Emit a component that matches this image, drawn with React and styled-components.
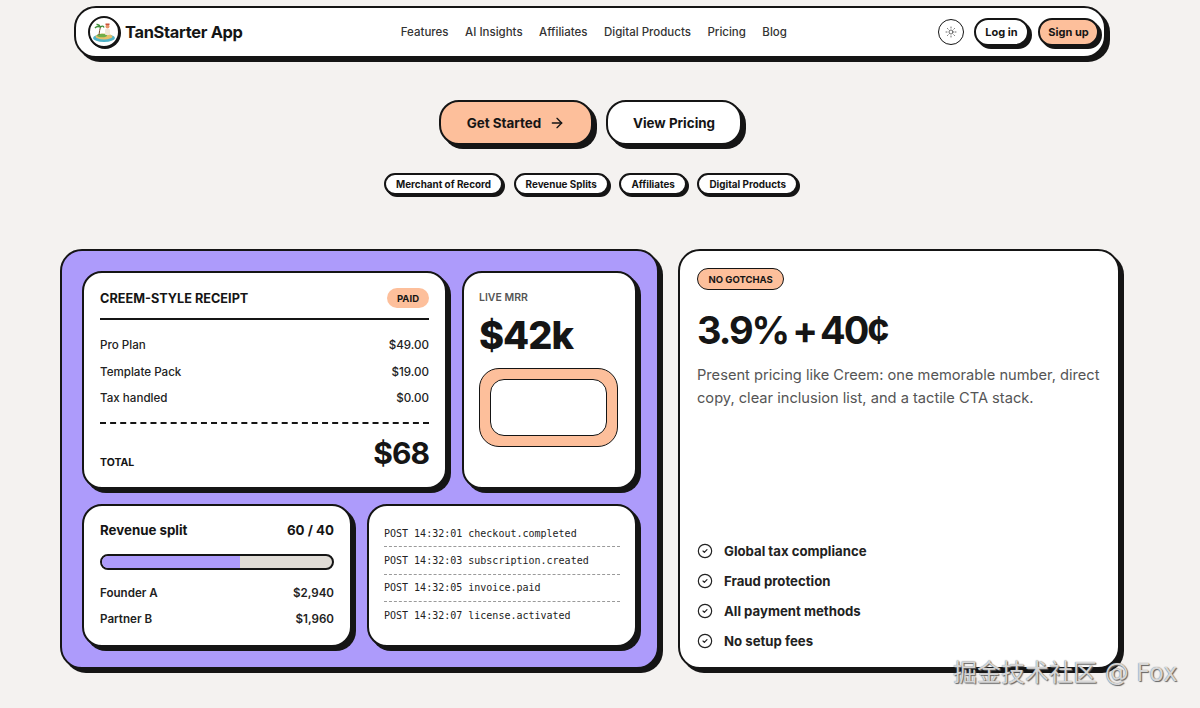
import React from 'react';
import styled, { createGlobalStyle } from 'styled-components';
import { ArrowRight, CircleCheck, Sun } from 'lucide-react';

const ink = '#151515';
const peach = '#fdbf9b';
const violet = '#ad9bfb';

const GlobalStyle = createGlobalStyle`
  html, body {
    margin: 0;
    padding: 0;
    background: #f4f2f0;
    color: ${ink};
    font-family: Inter, "Liberation Sans", sans-serif;
    overflow: hidden;
  }
  * { box-sizing: border-box; }
`;

const Page = styled.div`
  position: relative;
  height: 708px;
  padding-top: 6px;
`;

const Header = styled.header`
  width: 1032px;
  height: 52px;
  margin-left: 74px;
  padding: 0 5px 0 12px;
  display: flex;
  align-items: center;
  justify-content: space-between;
  background: #fff;
  border: 2px solid ${ink};
  border-radius: 22px;
  box-shadow: 4px 4px 0 ${ink};
`;

const Brand = styled.div`
  display: flex;
  align-items: center;
  gap: 5px;
  font-size: 16.4px;
  font-weight: 700;
  letter-spacing: -0.3px;
`;

const LogoMark = styled.div`
  width: 32px;
  height: 32px;
  border: 2px solid ${ink};
  border-radius: 50%;
  background: #fff;
  box-shadow: 1px 1px 0 ${ink};
  overflow: hidden;
`;

const Nav = styled.nav`
  display: flex;
  gap: 16.5px;
  margin-left: 7px;
  font-size: 11.5px;
  font-weight: 500;
  color: #333;
`;

const Actions = styled.div`
  display: flex;
  align-items: center;
  gap: 9px;
`;

const ThemeButton = styled.div`
  width: 26px;
  height: 26px;
  margin-right: 1px;
  display: flex;
  align-items: center;
  justify-content: center;
  border: 1px solid ${ink};
  border-radius: 50%;
`;

const SmallButton = styled.div`
  height: 28px;
  width: ${(p) => p.$w}px;
  display: flex;
  align-items: center;
  justify-content: center;
  font-size: 11px;
  font-weight: 700;
  background: ${(p) => (p.$primary ? peach : '#fff')};
  border: 2px solid ${ink};
  border-radius: 14px;
  box-shadow: 3px 3px 0 ${ink};
`;

const Hero = styled.div`
  margin-top: 42px;
  display: flex;
  justify-content: center;
  gap: 13px;
  padding-right: 19px;
`;

const HeroButton = styled.div`
  width: ${(p) => p.$w}px;
  height: 45px;
  display: flex;
  align-items: center;
  justify-content: center;
  gap: 8px;
  font-size: 13.4px;
  font-weight: 700;
  background: ${(p) => (p.$primary ? peach : '#fff')};
  border: 2px solid ${ink};
  border-radius: 20px;
  box-shadow: 4px 4px 0 ${ink};
`;

const Chips = styled.div`
  margin-top: 28px;
  display: flex;
  justify-content: center;
  gap: 10.5px;
  padding-right: 18px;
`;

const Chip = styled.div`
  height: 22px;
  padding: 0 10px;
  display: flex;
  align-items: center;
  font-size: 9.9px;
  font-weight: 700;
  background: #fff;
  border: 2px solid ${ink};
  border-radius: 11px;
  box-shadow: 2px 2px 0 ${ink};
`;

const Main = styled.main`
  margin: 54px 0 0 60px;
  display: grid;
  grid-template-columns: 599px 442px;
  gap: 19px;
  height: 420px;
`;

const VioletPanel = styled.section`
  padding: 20px;
  display: grid;
  grid-template-columns: 270px 80px 175px;
  grid-template-rows: 218px 143px;
  gap: 15px;
  background: ${violet};
  border: 2px solid ${ink};
  border-radius: 22px;
  box-shadow: 4px 4px 0 ${ink};
`;

const Card = styled.div`
  grid-column: ${(p) => p.$col};
  padding: ${(p) => p.$pad};
  display: flex;
  flex-direction: column;
  background: #fff;
  border: 2px solid ${ink};
  border-radius: 20px;
  box-shadow: 4px 4px 0 ${ink};
  min-width: 0;
`;

const ReceiptHead = styled.div`
  height: 32px;
  padding-bottom: 10px;
  display: flex;
  align-items: center;
  justify-content: space-between;
  font-size: 12.7px;
  font-weight: 700;
  border-bottom: 2px solid ${ink};
`;

const PaidPill = styled.span`
  width: 42px;
  height: 20px;
  display: flex;
  align-items: center;
  justify-content: center;
  font-size: 9.5px;
  font-weight: 700;
  background: ${peach};
  border-radius: 10px;
`;

const Rows = styled.div`
  margin-top: ${(p) => p.$top}px;
  display: flex;
  flex-direction: column;
  gap: ${(p) => p.$gap}px;
`;

const Row = styled.div`
  height: 14px;
  display: flex;
  align-items: center;
  justify-content: space-between;
  font-size: 11.6px;
  font-weight: ${(p) => p.$weight || 500};
  color: #222;
`;

const DashedLine = styled.div`
  margin-top: 17px;
  border-top: 2px dashed ${ink};
`;

const TotalRow = styled.div`
  margin-top: 11px;
  display: flex;
  align-items: flex-end;
  justify-content: space-between;
`;

const TotalLabel = styled.span`
  font-size: 10.5px;
  line-height: 13px;
  font-weight: 700;
  padding-bottom: 2.5px;
`;

const TotalValue = styled.span`
  font-size: 30px;
  line-height: 36px;
  font-weight: 700;
  letter-spacing: -1px;
`;

const Eyebrow = styled.div`
  margin-top: 3px;
  font-size: 10.5px;
  line-height: 14px;
  font-weight: 600;
  color: #555;
`;

const BigValue = styled.div`
  margin-top: 7px;
  font-size: 38px;
  line-height: 46px;
  font-weight: 800;
  letter-spacing: -1px;
`;

const PeachFrame = styled.div`
  width: 139px;
  height: 79px;
  margin-top: 10px;
  padding: 10px;
  background: ${peach};
  border: 1.5px solid ${ink};
  border-radius: 20px;
`;

const PeachInner = styled.div`
  height: 100%;
  background: #fff;
  border: 1.5px solid ${ink};
  border-radius: 14px;
`;

const SplitHead = styled.div`
  display: flex;
  justify-content: space-between;
  font-size: 13.3px;
  line-height: 18px;
  font-weight: 700;
`;

const Bar = styled.div`
  height: 16px;
  margin-top: 15px;
  background: #e0dcd6;
  border: 2px solid ${ink};
  border-radius: 8px;
  overflow: hidden;
`;

const BarFill = styled.div`
  height: 100%;
  background: ${violet};
`;

const LogLine = styled.div`
  height: 27.4px;
  flex: none;
  display: flex;
  align-items: center;
  font-family: "DejaVu Sans Mono", "Liberation Mono", monospace;
  font-size: 10px;
  color: #222;
  white-space: pre;
  border-bottom: ${(p) => (p.$last ? 'none' : '1px dashed #9a9a9a')};
`;

const PriceCard = styled.section`
  padding: 17px;
  display: flex;
  flex-direction: column;
  background: #fff;
  border: 2px solid ${ink};
  border-radius: 22px;
  box-shadow: 4px 4px 0 ${ink};
`;

const Badge = styled.div`
  align-self: flex-start;
  height: 22px;
  padding: 0 10.5px;
  display: flex;
  align-items: center;
  font-size: 9.5px;
  font-weight: 700;
  background: ${peach};
  border: 1.5px solid ${ink};
  border-radius: 11px;
`;

const PriceTitle = styled.h2`
  margin: 16px 0 0;
  font-size: 38px;
  line-height: 48px;
  font-weight: 700;
  letter-spacing: -2px;
  word-spacing: -3px;
`;

const PriceText = styled.p`
  margin: 9.5px 0 0;
  font-size: 14.65px;
  line-height: 23px;
  color: #555;
`;

const Inclusions = styled.ul`
  margin: auto 0 0;
  padding: 0;
  list-style: none;
  display: flex;
  flex-direction: column;
  gap: 12px;
`;

const Inclusion = styled.li`
  height: 18px;
  display: flex;
  align-items: center;
  gap: 11px;
  font-size: 13.2px;
  font-weight: 700;
  color: #222;
`;

const Watermark = styled.div`
  position: absolute;
  left: 953px;
  top: 658px;
  font-family: "DejaVu Sans", "Noto Sans CJK SC", sans-serif;
  font-size: 24px;
  line-height: 30px;
  color: rgba(255, 255, 255, 0.75);
  text-shadow: 0 0 1px #555, 1px 1px 1px #666;
  white-space: nowrap;
`;

const navItems = ['Features', 'AI Insights', 'Affiliates', 'Digital Products', 'Pricing', 'Blog'];
const chips = ['Merchant of Record', 'Revenue Splits', 'Affiliates', 'Digital Products'];
const receipt = [
  ['Pro Plan', '$49.00'],
  ['Template Pack', '$19.00'],
  ['Tax handled', '$0.00'],
];
const splits = [
  ['Founder A', '$2,940'],
  ['Partner B', '$1,960'],
];
const logs = [
  'POST 14:32:01 checkout.completed',
  'POST 14:32:03 subscription.created',
  'POST 14:32:05 invoice.paid',
  'POST 14:32:07 license.activated',
];
const inclusions = ['Global tax compliance', 'Fraud protection', 'All payment methods', 'No setup fees'];

const IslandLogo = () => (
  <svg width="28" height="28" viewBox="0 0 28 28">
    <ellipse cx="14" cy="20" rx="11" ry="4" fill="#4fb3c8" />
    <ellipse cx="14" cy="18.5" rx="8.5" ry="3" fill="#e6c06a" />
    <ellipse cx="12" cy="17.5" rx="5" ry="1.8" fill="#6fae4a" />
    <path d="M9 17 Q9.5 12 10.5 9" stroke="#7a5230" strokeWidth="1" fill="none" />
    <path d="M10.5 9 Q7 7.5 5 10 M10.5 9 Q9 6 6.5 6.5 M10.5 9 Q13 7 14 9.5" stroke="#3f8f3a" strokeWidth="1.4" fill="none" />
    <rect x="15" y="11" width="5" height="6" rx="1" fill="#f0e6d8" />
    <circle cx="17.5" cy="8.5" r="2" fill="#e8956a" />
    <rect x="15.5" y="5.5" width="4" height="1.6" fill="#c9503a" />
  </svg>
);

export default function App() {
  return (
    <Page>
      <GlobalStyle />
      <Header>
        <Brand>
          <LogoMark><IslandLogo /></LogoMark>
          TanStarter App
        </Brand>
        <Nav>
          {navItems.map((item) => <span key={item}>{item}</span>)}
        </Nav>
        <Actions>
          <ThemeButton><Sun size={12} strokeWidth={1.25} /></ThemeButton>
          <SmallButton $w={55}>Log in</SmallButton>
          <SmallButton $w={61} $primary>Sign up</SmallButton>
        </Actions>
      </Header>

      <Hero>
        <HeroButton $w={154} $primary>
          Get Started <ArrowRight size={16} strokeWidth={2} />
        </HeroButton>
        <HeroButton $w={136}>View Pricing</HeroButton>
      </Hero>

      <Chips>
        {chips.map((chip) => <Chip key={chip}>{chip}</Chip>)}
      </Chips>

      <Main>
        <VioletPanel>
          <Card $col="1 / span 2" $pad="15px 16px">
            <ReceiptHead>
              CREEM-STYLE RECEIPT
              <PaidPill>PAID</PaidPill>
            </ReceiptHead>
            <Rows $top={18} $gap={12.5}>
              {receipt.map(([label, value]) => (
                <Row key={label}><span>{label}</span><span>{value}</span></Row>
              ))}
            </Rows>
            <DashedLine />
            <TotalRow>
              <TotalLabel>TOTAL</TotalLabel>
              <TotalValue>$68</TotalValue>
            </TotalRow>
          </Card>
          <Card $col="3" $pad="15px">
            <Eyebrow>LIVE MRR</Eyebrow>
            <BigValue>$42k</BigValue>
            <PeachFrame><PeachInner /></PeachFrame>
          </Card>
          <Card $col="1" $pad="15px 16px">
            <SplitHead>
              <span>Revenue split</span>
              <span>60 / 40</span>
            </SplitHead>
            <Bar><BarFill style={{ width: '60%' }} /></Bar>
            <Rows $top={16} $gap={12}>
              {splits.map(([label, value]) => (
                <Row key={label} $weight={600}><span>{label}</span><span>{value}</span></Row>
              ))}
            </Rows>
          </Card>
          <Card $col="2 / span 2" $pad="14px 15px">
            {logs.map((line, i) => (
              <LogLine key={line} $last={i === logs.length - 1}>{line}</LogLine>
            ))}
          </Card>
        </VioletPanel>

        <PriceCard>
          <Badge>NO GOTCHAS</Badge>
          <PriceTitle>3.9% + 40¢</PriceTitle>
          <PriceText>
            Present pricing like Creem: one memorable number, direct copy, clear inclusion list, and a tactile CTA stack.
          </PriceText>
          <Inclusions>
            {inclusions.map((item) => (
              <Inclusion key={item}>
                <CircleCheck size={16} strokeWidth={1.75} />
                {item}
              </Inclusion>
            ))}
          </Inclusions>
        </PriceCard>
      </Main>

      <Watermark>掘金技术社区 @ Fox</Watermark>
    </Page>
  );
}
